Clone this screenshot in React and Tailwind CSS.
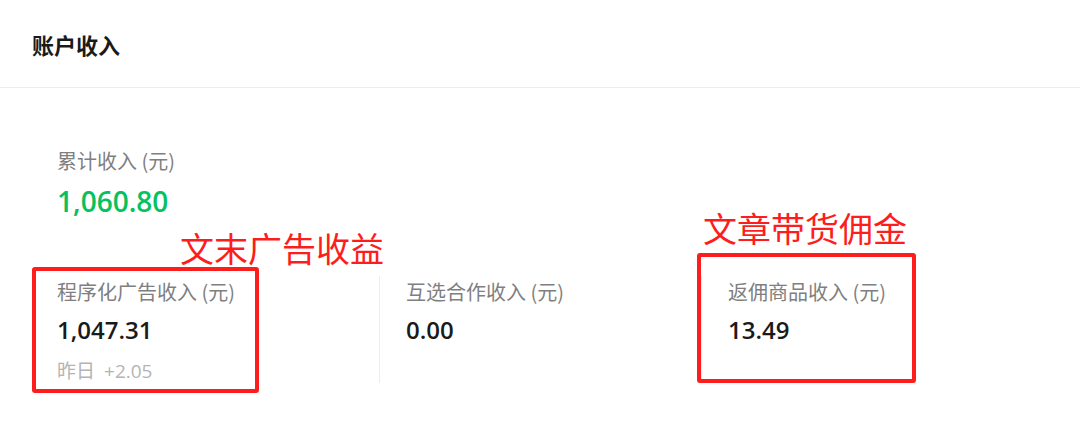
import React from "react";

function Col({ label, value, sub, first }) {
  return (
    <div className={first ? "flex flex-col h-[107px] pt-[2px]" : "flex flex-col h-[107px] pt-[2px] border-l border-[#ededed] pl-[26px]"}>
      <div className="text-[20px] leading-[28px] text-[#7f7f7f]">{label}</div>
      <div className="mt-2 font-['Open_Sans','Noto_Sans_CJK_SC',sans-serif] text-[24px] leading-[32px] font-semibold text-[#1a1a1a]">{value}</div>
      {sub && (
        <div className="mt-[11px] flex items-baseline gap-[9px] text-[19px] leading-[26px] text-[#b4b4b4]">
          <span>昨日</span>
          <span className="font-['Open_Sans',sans-serif] text-[19px]">+2.05</span>
        </div>
      )}
    </div>
  );
}

function Note({ text, box, textClass }) {
  return (
    <div className="flex flex-col">
      <div className={"text-[34px] leading-[34px] text-[#fe1d1d] " + textClass}>{text}</div>
      <div className={"border-4 border-[#fe1d1d] rounded-[3px] " + box} />
    </div>
  );
}

export default function App() {
  return (
    <div className="w-[1080px] h-[435px] bg-white overflow-hidden font-['Noto_Sans_CJK_SC','Noto_Sans',sans-serif]">
      <header className="h-[88px] border-b border-[#ececec] flex items-center pl-8">
        <h1 className="text-[22px] font-bold text-[#1a1a1a] leading-[30px]">账户收入</h1>
      </header>
      <main className="relative pl-[57px] pt-[59px]">
        <div className="flex flex-col gap-2">
          <div className="text-[20px] leading-[28px] text-[#7f7f7f]">累计收入 (元)</div>
          <div className="font-['Open_Sans','Noto_Sans_CJK_SC',sans-serif] text-[28px] leading-[36px] font-semibold text-[#07c160]">1,060.80</div>
        </div>
        <div className="mt-[57px] grid grid-cols-3 w-[966px]">
          <Col first label="程序化广告收入 (元)" value="1,047.31" sub />
          <Col label="互选合作收入 (元)" value="0.00" />
          <Col label="返佣商品收入 (元)" value="13.49" />
        </div>

        <div className="absolute left-[32px] top-[143px]">
          <Note text="文末广告收益" textClass="ml-[148px] mb-[2px]" box="w-[227px] h-[126px]" />
        </div>
        <div className="absolute left-[697px] top-[123px]">
          <Note text="文章带货佣金" textClass="ml-[6px] mb-[8px]" box="w-[219px] h-[130px]" />
        </div>
      </main>
    </div>
  );
}
